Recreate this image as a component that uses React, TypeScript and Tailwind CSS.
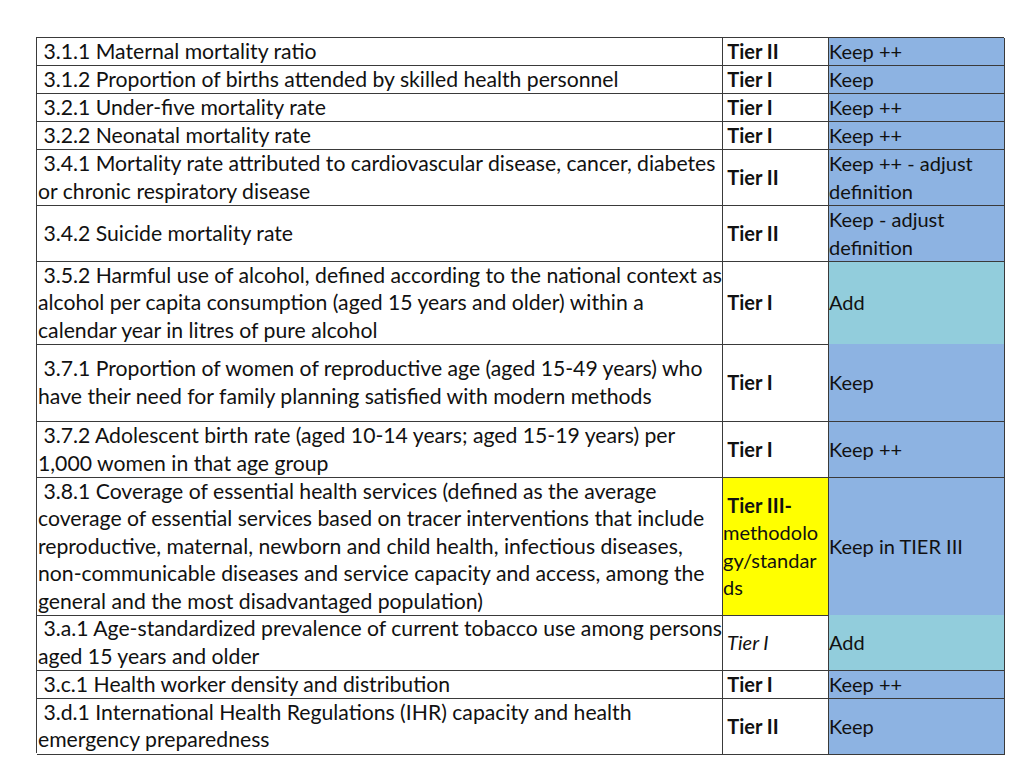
import React from "react";

/* ================= DATA ================= */
type Tier = { lines: string[]; bold?: boolean; italic?: boolean; yellow?: boolean };

interface Row {
  h: number;
  indicator: string[];
  tier: Tier;
  action: string[];
  add?: boolean;
}

const ROWS: Row[] = [
  { h: 28, indicator: ["3.1.1 Maternal mortality ratio"], tier: { lines: ["Tier II"], bold: true }, action: ["Keep ++"] },
  { h: 28, indicator: ["3.1.2 Proportion of births attended by skilled health personnel"], tier: { lines: ["Tier I"], bold: true }, action: ["Keep"] },
  { h: 28, indicator: ["3.2.1 Under-five mortality rate"], tier: { lines: ["Tier I"], bold: true }, action: ["Keep ++"] },
  { h: 28, indicator: ["3.2.2 Neonatal mortality rate"], tier: { lines: ["Tier I"], bold: true }, action: ["Keep ++"] },
  {
    h: 56,
    indicator: [
      "3.4.1 Mortality rate attributed to cardiovascular disease, cancer, diabetes",
      "or chronic respiratory disease",
    ],
    tier: { lines: ["Tier II"], bold: true },
    action: ["Keep ++ - adjust", "definition"],
  },
  { h: 56, indicator: ["3.4.2 Suicide mortality rate"], tier: { lines: ["Tier II"], bold: true }, action: ["Keep - adjust", "definition"] },
  {
    h: 82,
    indicator: [
      "3.5.2 Harmful use of alcohol, defined according to the national context as",
      "alcohol per capita consumption (aged 15 years and older) within a",
      "calendar year in litres of pure alcohol",
    ],
    tier: { lines: ["Tier I"], bold: true },
    action: ["Add"],
    add: true,
  },
  {
    h: 78,
    indicator: [
      "3.7.1 Proportion of women of reproductive age (aged 15-49 years) who",
      "have their need for family planning satisfied with modern methods",
    ],
    tier: { lines: ["Tier I"], bold: true },
    action: ["Keep"],
  },
  {
    h: 56,
    indicator: [
      "3.7.2 Adolescent birth rate (aged 10-14 years; aged 15-19 years) per",
      "1,000 women in that age group",
    ],
    tier: { lines: ["Tier I"], bold: true },
    action: ["Keep ++"],
  },
  {
    h: 137,
    indicator: [
      "3.8.1 Coverage of essential health services (defined as the average",
      "coverage of essential services based on tracer interventions that include",
      "reproductive, maternal, newborn and child health, infectious diseases,",
      "non-communicable diseases and service capacity and access, among the",
      "general and the most disadvantaged population)",
    ],
    tier: { lines: ["Tier III-", "methodolo", "gy/standar", "ds"], yellow: true },
    action: ["Keep in TIER III"],
  },
  {
    h: 56,
    indicator: [
      "3.a.1 Age-standardized prevalence of current tobacco use among persons",
      "aged 15 years and older",
    ],
    tier: { lines: ["Tier I"], italic: true },
    action: ["Add"],
    add: true,
  },
  { h: 28, indicator: ["3.c.1 Health worker density and distribution"], tier: { lines: ["Tier I"], bold: true }, action: ["Keep ++"] },
  {
    h: 54,
    indicator: [
      "3.d.1 International Health Regulations (IHR) capacity and health",
      "emergency preparedness",
    ],
    tier: { lines: ["Tier II"], bold: true },
    action: ["Keep"],
  },
];

/* ================= CELLS ================= */
function Lines({ lines, indentFirst }: { lines: string[]; indentFirst?: boolean }) {
  return (
    <>
      {lines.map((l, i) => (
        <div key={i} className="whitespace-nowrap">
          {indentFirst && i === 0 ? "\u00a0" + l : l}
        </div>
      ))}
    </>
  );
}

function TierCell({ tier }: { tier: Tier }) {
  if (tier.yellow) {
    return (
      <div className="flex flex-col justify-center bg-[#ffff00] border-r border-b border-[#3a3a3a]">
        <div className="whitespace-nowrap font-bold">{"\u00a0" + tier.lines[0]}</div>
        {tier.lines.slice(1).map((l, i) => (
          <div key={i} className="whitespace-nowrap">{l}</div>
        ))}
      </div>
    );
  }
  return (
    <div
      className={`flex flex-col justify-center border-r border-b border-[#3a3a3a] ${
        tier.bold ? "font-bold" : ""
      } ${tier.italic ? "italic" : ""}`}
    >
      <Lines lines={tier.lines} indentFirst />
    </div>
  );
}

/* ================= PAGE ================= */
export default function App() {
  return (
    <div
      className="w-[1024px] h-[768px] bg-white text-[#111] pt-[37px] pl-[36px]"
      style={{ fontFamily: "Lato, 'Noto Sans', sans-serif" }}
    >
      <div className="w-[968px] border-l border-t border-[#3a3a3a] text-[20px] leading-[27.4px]">
        {ROWS.map((r, i) => (
          <div
            key={i}
            className="grid grid-cols-[686px_106px_176px]"
            style={{ height: r.h }}
          >
            <div className="flex flex-col justify-center pl-px text-[21.2px] border-r border-b border-[#3a3a3a]">
              <Lines lines={r.indicator} indentFirst />
            </div>
            <TierCell tier={r.tier} />
            <div
              className={`flex flex-col justify-center border-r border-b border-[#3a3a3a] ${
                r.add ? "bg-[#92cddc]" : "bg-[#8db3e2]"
              }`}
            >
              <Lines lines={r.action} />
            </div>
          </div>
        ))}
      </div>
    </div>
  );
}
